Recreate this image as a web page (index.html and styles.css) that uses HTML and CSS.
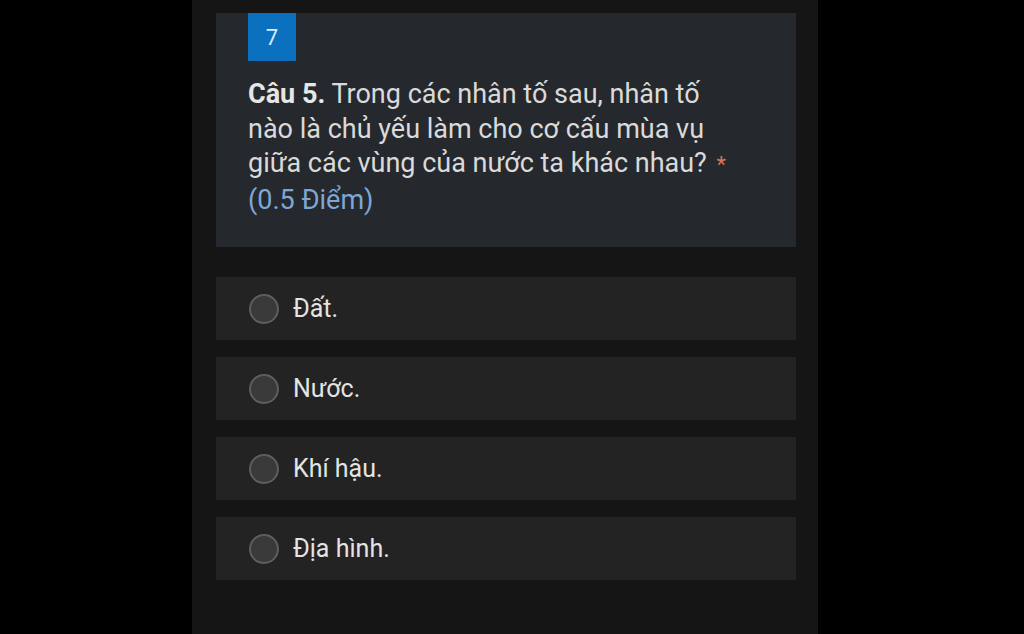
FILE: index.html
```html
<!DOCTYPE html>
<html lang="vi">
<head>
<meta charset="utf-8">
<link rel="stylesheet" href="styles.css">
</head>
<body>
<div class="phone">
  <div class="question">
    <div class="badge">7</div>
    <div class="qtext"><b>Câu 5.</b> Trong các nhân tố sau, nhân tố<br>nào là chủ yếu làm cho cơ cấu mùa vụ<br>giữa các vùng của nước ta khác nhau? <span class="req">*</span><br><span class="pts">(0.5 Điểm)</span></div>
  </div>
  <div class="options">
    <div class="option"><span class="radio"></span><span class="label">Đất.</span></div>
    <div class="option"><span class="radio"></span><span class="label">Nước.</span></div>
    <div class="option"><span class="radio"></span><span class="label">Khí hậu.</span></div>
    <div class="option"><span class="radio"></span><span class="label">Địa hình.</span></div>
  </div>
</div>
</body>
</html>
```

FILE: styles.css
```css
html, body {
  margin: 0;
  padding: 0;
  background: #000;
  height: 634px;
  overflow: hidden;
}
body {
  font-family: Roboto, "Liberation Sans", Arial, sans-serif;
}
.phone {
  margin-left: 192px;
  width: 626px;
  height: 634px;
  background: #151515;
  padding-top: 13px;
  box-sizing: border-box;
}
.question {
  margin-left: 24px;
  width: 580px;
  height: 234px;
  box-sizing: border-box;
  background: #25292d;
  padding: 0 20px 0 32px;
}
.badge {
  width: 48px;
  height: 48px;
  background: #0b70bd;
  color: #d8ecff;
  font-size: 22px;
  display: flex;
  align-items: center;
  justify-content: center;
}
.qtext {
  margin-top: 16px;
  font-size: 27px;
  line-height: 34.5px;
  color: #dadada;
  white-space: nowrap;
}
.qtext b {
  font-weight: 700;
  color: #e6e6e6;
}
.req {
  color: #d9735c;
  font-size: 22px;
  margin-left: 3px;
}
.pts {
  color: #7ea6d6;
}
.options {
  margin-top: 30px;
  margin-left: 24px;
  width: 580px;
  display: flex;
  flex-direction: column;
  gap: 17px;
}
.option {
  height: 63px;
  background: #232323;
  display: flex;
  align-items: center;
  padding-left: 33px;
  box-sizing: border-box;
}
.radio {
  width: 26px;
  height: 26px;
  border-radius: 50%;
  border: 2px solid #5e5e5e;
  background: #3a3a3a;
  flex: none;
}
.label {
  margin-left: 14px;
  font-size: 25px;
  color: #e4e4e4;
}
```
